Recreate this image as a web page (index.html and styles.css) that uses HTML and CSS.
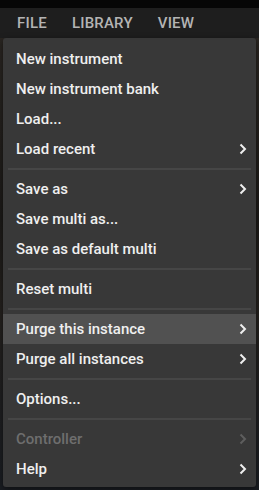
FILE: index.html
```html
<!DOCTYPE html>
<html lang="en">
<head>
    <meta charset="UTF-8">
    <title>File menu</title>
    <link rel="stylesheet" href="styles.css">
</head>
<body>
    <div class="topbar">
        <span class="menu-title">FILE</span>
        <span class="menu-title">LIBRARY</span>
        <span class="menu-title">VIEW</span>
    </div>

    <div class="workspace">
        <div class="dropdown">
            <div class="item">New instrument</div>
            <div class="item">New instrument bank</div>
            <div class="item">Load...</div>
            <div class="item sub">Load recent <svg class="chev" viewBox="0 0 8 12"><polyline points="1.5,1.5 6,6 1.5,10.5"/></svg></div>
            <div class="sep"></div>
            <div class="item sub">Save as <svg class="chev" viewBox="0 0 8 12"><polyline points="1.5,1.5 6,6 1.5,10.5"/></svg></div>
            <div class="item">Save multi as...</div>
            <div class="item">Save as default multi</div>
            <div class="sep"></div>
            <div class="item">Reset multi</div>
            <div class="sep"></div>
            <div class="item sub active">Purge this instance <svg class="chev" viewBox="0 0 8 12"><polyline points="1.5,1.5 6,6 1.5,10.5"/></svg></div>
            <div class="item sub">Purge all instances <svg class="chev" viewBox="0 0 8 12"><polyline points="1.5,1.5 6,6 1.5,10.5"/></svg></div>
            <div class="sep"></div>
            <div class="item">Options...</div>
            <div class="sep"></div>
            <div class="item sub disabled">Controller <svg class="chev" viewBox="0 0 8 12"><polyline points="1.5,1.5 6,6 1.5,10.5"/></svg></div>
            <div class="item sub">Help <svg class="chev" viewBox="0 0 8 12"><polyline points="1.5,1.5 6,6 1.5,10.5"/></svg></div>
        </div>
    </div>
</body>
</html>
```

FILE: styles.css
```css
body {
    margin: 0;
    background: #141414;
    font-family: Roboto, "Liberation Sans", sans-serif;
    color: #ececec;
    height: 490px;
    overflow: hidden;
}

.topbar {
    margin-top: 8px;
    height: 30px;
    background: #1e1e1e;
    display: flex;
    align-items: center;
    padding-left: 17px;
    gap: 25px;
    box-shadow: 0 -8px 0 #060606;
}

.menu-title {
    font-size: 15px;
    font-weight: 500;
    color: #b4b4b4;
    letter-spacing: 0.2px;
}

.workspace {
    height: 452px;
    background: linear-gradient(180deg, #2a2622 0%, #1c1a18 40%, #24211e 60%, #1a1d22 100%);
    padding: 0 3px;
}

.dropdown {
    background: #383838;
    border-radius: 3px;
    padding: 6px 0 3px;
    box-shadow: 0 2px 6px rgba(0,0,0,0.5);
}

.item {
    height: 30px;
    display: flex;
    align-items: center;
    justify-content: space-between;
    padding: 0 9px 0 13px;
    font-size: 15px;
    font-weight: 500;
    color: #efefef;
}

.item.active {
    background: #515151;
}

.item.disabled {
    color: #6e6e6e;
}

.chev {
    width: 8px;
    height: 12px;
    fill: none;
    stroke: currentColor;
    stroke-width: 2;
}

.disabled .chev {
    stroke: #5e5e5e;
}

.sep {
    height: 2px;
    margin: 4px 5px;
    background: #464646;
}
```
